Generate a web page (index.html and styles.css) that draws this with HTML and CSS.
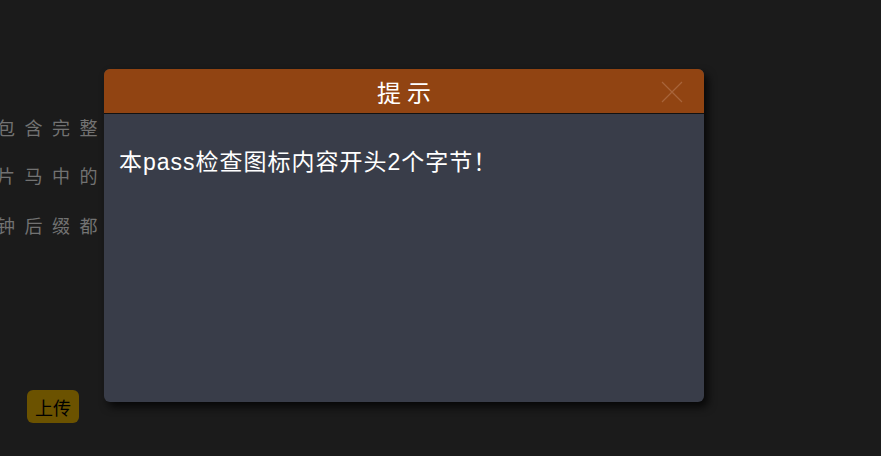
FILE: index.html
```html
<!DOCTYPE html>
<html>

<head>
    <link rel="stylesheet" href="styles.css">
</head>

<body>
    <div class='page'>
        <div class='intro'>
            <p>包含完整上传</p>
            <p>片马中的图</p>
            <p>钟后缀都上</p>
        </div>
        <button class='upload'>上传</button>
    </div>

    <div class='dialog'>
        <div class='dialog-head'>
            <span class='dialog-title'>提示</span>
            <span class='dialog-close'>
                <svg width="22" height="22" viewBox="0 0 22 22">
                    <path d="M1 1L21 21M21 1L1 21" stroke="#a8643a" stroke-width="1.2" fill="none" />
                </svg>
            </span>
        </div>
        <div class='dialog-body'>本pass检查图标内容开头2个字节！</div>
    </div>
</body>

</html>
```

FILE: styles.css
```css
body {
    margin: 0;
    background: #1b1b1b;
    font-family: "Noto Sans CJK SC", "Noto Sans", sans-serif;
    width: 881px;
    height: 456px;
    overflow: hidden;
    position: relative;
}

.page {
    display: flex;
    flex-direction: column;
    padding-top: 113px;
}

.intro {
    margin-left: -3px;
}

.intro p {
    margin: 0 0 22px;
    font-size: 18px;
    line-height: 28px;
    letter-spacing: 9.5px;
    color: #727272;
    white-space: nowrap;
}

.intro p:first-child {
    margin-bottom: 20px;
}

.upload {
    align-self: flex-start;
    margin: 129px 0 0 27px;
    background: #6b5200;
    border: none;
    border-radius: 6px;
    padding: 0 8px;
    height: 33px;
    font-family: "Noto Sans CJK SC", sans-serif;
    font-size: 18px;
    color: #000;
}

.dialog {
    position: absolute;
    left: 104px;
    top: 69px;
    width: 600px;
    height: 333px;
    background: #393d49;
    border-radius: 6px;
    box-shadow: 4px 5px 8px rgba(0, 0, 0, 0.75);
    overflow: hidden;
}

.dialog-head {
    position: relative;
    height: 44px;
    background: #914412;
    border-bottom: 1px solid #111;
    display: flex;
    align-items: center;
    justify-content: center;
}

.dialog-title {
    color: #fff;
    font-size: 24px;
    letter-spacing: 6px;
    margin-left: 6px;
}

.dialog-close {
    position: absolute;
    right: 21px;
    top: 12px;
    width: 22px;
    height: 22px;
}

.dialog-body {
    padding: 33px 15px;
    color: #fff;
    font-family: "Liberation Sans", "Noto Sans CJK SC", sans-serif;
    font-size: 23px;
    line-height: 30px;
    letter-spacing: 1px;
}
```
